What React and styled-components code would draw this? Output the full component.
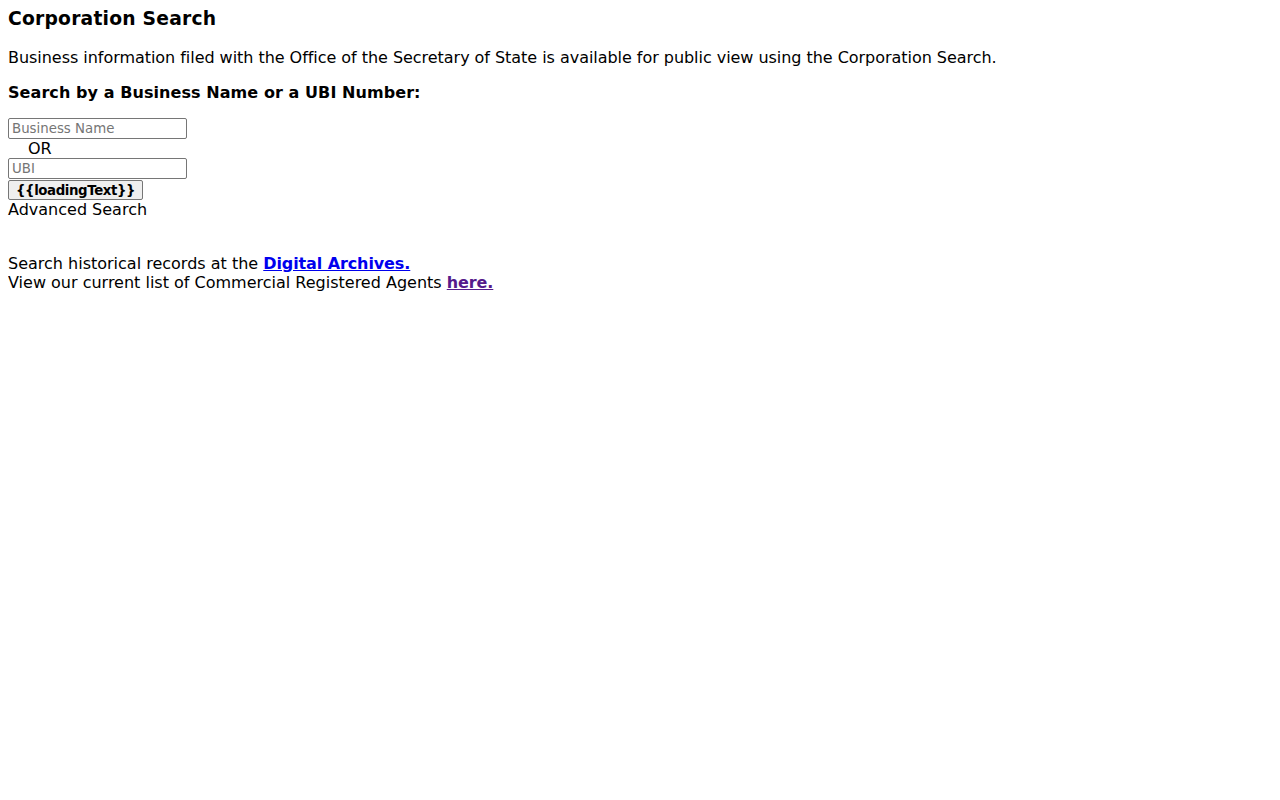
import React from "react";
import styled, { createGlobalStyle } from "styled-components";

const GlobalStyle = createGlobalStyle`
  body {
    margin: 8px;
    background: #fff;
    color: #000;
    font-family: "DejaVu Sans", sans-serif;
    font-size: 16px;
  }
`;

const Page = styled.div`
  display: flex;
  flex-direction: column;
`;

const Title = styled.h3`
  font-size: 18.72px;
  font-weight: bold;
  letter-spacing: 0.22px;
  margin: 0 0 18px 0;
  line-height: 22px;
`;

const Intro = styled.p`
  margin: 0 0 16px 0;
  line-height: 19px;
  letter-spacing: -0.04px;
`;

const Prompt = styled.p`
  margin: 0 0 16px 0;
  font-weight: bold;
  letter-spacing: 0.07px;
  line-height: 19px;
`;

const SearchForm = styled.form`
  display: flex;
  flex-direction: column;
  align-items: flex-start;
`;

const TextField = styled.input`
  box-sizing: border-box;
  width: 179px;
  height: 21px;
  padding: 1px 3px;
  font-family: "DejaVu Sans", sans-serif;
  font-size: 13.33px;
  border: 1px solid #767676;
  border-radius: 2px;
  background: #fff;
  &::placeholder {
    color: #757575;
  }
`;

const OrLabel = styled.div`
  padding-left: 20px;
  line-height: 19px;
`;

const SubmitButton = styled.button`
  box-sizing: border-box;
  margin-top: 1px;
  height: 20px;
  padding: 0 7px;
  font-family: "DejaVu Sans", sans-serif;
  font-size: 13.33px;
  letter-spacing: -0.4px;
  font-weight: bold;
  color: #000;
  background: #efefef;
  border: 1px solid #767676;
  border-radius: 2px;
`;

const Advanced = styled.div`
  line-height: 19px;
`;

const Footer = styled.div`
  margin-top: 35px;
  line-height: 19px;
`;

const Link = styled.a`
  font-weight: bold;
  letter-spacing: -0.1px;
  color: ${(p) => (p.$visited ? "#551a8b" : "#0000ee")};
  text-decoration: underline;
`;

export default function App() {
  return (
    <>
      <GlobalStyle />
      <Page>
        <Title>Corporation Search</Title>
        <Intro>
          Business information filed with the Office of the Secretary of State
          is available for public view using the Corporation Search.
        </Intro>
        <Prompt>Search by a Business Name or a UBI Number:</Prompt>
        <SearchForm onSubmit={(e) => e.preventDefault()}>
          <TextField type="text" placeholder="Business Name" />
          <OrLabel>OR</OrLabel>
          <TextField type="text" placeholder="UBI" />
          <SubmitButton type="submit">{"{{loadingText}}"}</SubmitButton>
          <Advanced>Advanced Search</Advanced>
        </SearchForm>
        <Footer>
          <div>
            Search historical records at the{" "}
            <Link href="#archives">Digital Archives.</Link>
          </div>
          <div>
            View our current list of Commercial Registered Agents{" "}
            <Link href="#agents" $visited>
              here.
            </Link>
          </div>
        </Footer>
      </Page>
    </>
  );
}
